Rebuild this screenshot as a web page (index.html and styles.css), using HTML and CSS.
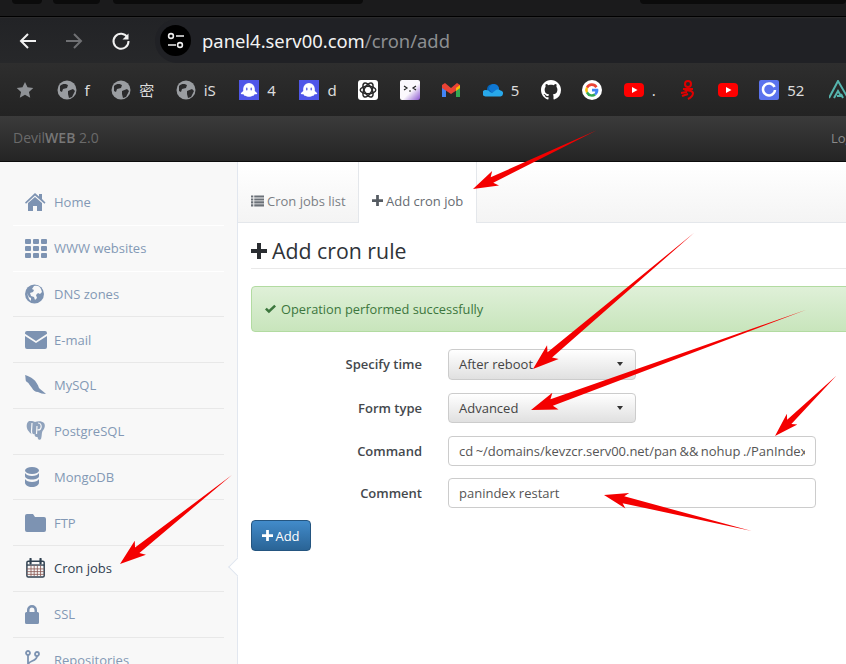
FILE: index.html
```html
<!DOCTYPE html>
<html lang="en">
<head>
<meta charset="utf-8">
<title>DevilWEB 2.0</title>
<link rel="stylesheet" href="styles.css">
</head>
<body>
<div class="page">
  <div class="tabstrip">
    <div class="tab t1"></div>
    <div class="tab t2"></div>
    <div class="tab t3"></div>
    <div class="tab t4"></div>
  </div>
  <div class="toolbar">
    <svg class="nav-icon" viewBox="0 0 20 20"><path d="M18 10H3M10 3l-7 7 7 7" fill="none" stroke="#f1f1f1" stroke-width="2"/></svg>
    <svg class="nav-icon" viewBox="0 0 20 20"><path d="M2 10h15M10 3l7 7-7 7" fill="none" stroke="#6f7073" stroke-width="2"/></svg>
    <svg class="nav-icon" viewBox="0 0 20 20"><path d="M16.500 6.500A7.500 7.500 0 1 0 17.500 10" fill="none" stroke="#f1f1f1" stroke-width="2"/><path d="M17.500 2.500v6h-6z" fill="#f1f1f1"/></svg>
    <div class="address">
      <span class="site-badge">
        <svg viewBox="0 0 20 20" width="20" height="20"><circle cx="5" cy="5" r="2.400" fill="none" stroke="#eee" stroke-width="1.600"/><path d="M10 5h8M2 14h8" stroke="#eee" stroke-width="1.600"/><circle cx="14" cy="14" r="2.400" fill="none" stroke="#eee" stroke-width="1.600"/></svg>
      </span>
      <span class="url"><span class="host">panel4.serv00.com</span>/cron/add</span>
    </div>
  </div>
  <div class="bookmarks">
    <svg class="bm-star" viewBox="0 0 20 20"><path d="M10 1l2.800 6 6.400.7-4.800 4.400 1.400 6.400-5.800-3.300-5.800 3.300 1.400-6.400L.8 7.700 7.200 7z" fill="#8f9296"/></svg>
    <div class="bm"><svg class="bm-icon"><use href="#i-bmglobe"/></svg><span>f</span></div>
    <div class="bm"><svg class="bm-icon"><use href="#i-bmglobe"/></svg><span>密</span></div>
    <div class="bm"><svg class="bm-icon"><use href="#i-bmglobe"/></svg><span>iS</span></div>
    <div class="bm shifted"><svg class="bm-icon"><use href="#i-ghost"/></svg><span>4</span></div>
    <div class="bm shifted"><svg class="bm-icon"><use href="#i-ghost"/></svg><span>d</span></div>
    <div class="bm"><svg class="bm-icon" viewBox="0 0 20 20"><rect width="20" height="20" rx="3" fill="#fff"/><g fill="none" stroke="#2a2a2a" stroke-width="1.500"><ellipse cx="10" cy="10" rx="7.800" ry="3.800"/><ellipse cx="10" cy="10" rx="7.800" ry="3.800" transform="rotate(60 10 10)"/><ellipse cx="10" cy="10" rx="7.800" ry="3.800" transform="rotate(120 10 10)"/></g></svg></div>
    <div class="bm"><svg class="bm-icon" viewBox="0 0 20 20"><defs><linearGradient id="kao" x1="0" y1="0" x2="1" y2="1"><stop offset=".55" stop-color="#fbf8fd"/><stop offset="1" stop-color="#8a55d0"/></linearGradient></defs><rect width="20" height="20" rx="2" fill="url(#kao)"/><path d="M4 6l3 2-3 2M16 6l-3 2 3 2M9 11h2" fill="none" stroke="#222" stroke-width="1.200"/></svg></div>
    <div class="bm"><svg class="bm-icon" viewBox="0 0 20 20"><path d="M1 5v12h4V8z" fill="#4285f4"/><path d="M19 5v12h-4V8z" fill="#34a853"/><path d="M1 5l3-2 6 5 6-5 3 2v3l-9 6-9-6z" fill="#ea4335"/><path d="M15 8l4-3 0 3-4 3z" fill="#fbbc04"/></svg></div>
    <div class="bm"><svg class="bm-icon" viewBox="0 0 20 20"><path d="M4 10a5.500 5.500 0 0 1 10-3.500L9 13H4z" fill="#0364b8"/><path d="M11 4a5 5 0 0 1 5 6l-7 3-3-4a5 5 0 0 1 5-5z" fill="#0f78d4"/><path d="M2.500 16.500a3 3 0 0 1 .5-6.500c2 0 3 .8 4 2l2 1 4-3c2-.8 3.500-.5 4.500.5 2 .5 3 2 2.500 3.500a3 3 0 0 1-2.500 2.500z" fill="#28a8ea"/></svg><span>5</span></div>
    <div class="bm"><svg class="bm-icon" viewBox="0 0 16 16"><path fill="#fff" d="M8 0C3.580 0 0 3.580 0 8c0 3.540 2.290 6.530 5.470 7.590.4.070.55-.170.550-.380 0-.190-.010-.820-.010-1.490-2.010.370-2.530-.490-2.690-.940-.090-.230-.480-.940-.820-1.130-.280-.150-.680-.520-.010-.530.630-.010 1.080.580 1.230.820.720 1.210 1.870.870 2.330.660.070-.520.280-.870.510-1.070-1.780-.200-3.640-.890-3.640-3.950 0-.870.310-1.590.820-2.150-.080-.200-.360-1.020.080-2.120 0 0 .670-.210 2.200.820.640-.180 1.320-.270 2-.270s1.360.090 2 .270c1.530-1.040 2.200-.820 2.200-.820.440 1.100.160 1.920.080 2.120.510.560.820 1.270.820 2.150 0 3.070-1.870 3.750-3.650 3.950.290.250.540.730.540 1.480 0 1.070-.010 1.930-.010 2.200 0 .210.150.460.550.380A8.010 8.010 0 0 0 16 8c0-4.420-3.580-8-8-8z"/></svg></div>
    <div class="bm"><svg class="bm-icon" viewBox="0 0 20 20"><circle cx="10" cy="10" r="10" fill="#fff"/><path d="M15.500 6.500A6.500 6.500 0 0 0 4 6.800l2 1.800a4 4 0 0 1 7.300-.6z" fill="#ea4335"/><path d="M4 6.800a6.500 6.500 0 0 0 0 6.400l2-1.600a4 4 0 0 1 0-3z" fill="#fbbc04"/><path d="M4 13.200a6.500 6.500 0 0 0 10 2l-2-1.600a4 4 0 0 1-6-2z" fill="#34a853"/><path d="M10 8.800h6.200a6.500 6.500 0 0 1-2.200 6.400l-2-1.600a3 3 0 0 0 1.300-2.200H10z" fill="#4285f4"/></svg></div>
    <div class="bm roomy"><svg class="bm-icon"><use href="#i-yt"/></svg><span>.</span></div>
    <div class="bm"><svg class="bm-icon narrow" viewBox="0 0 16 20"><g fill="none" stroke="#e00000" stroke-width="2"><circle cx="8" cy="4" r="3"/><path d="M3 9h10M4 9c2 3 8 0 9 4 0 3-3 5-5 6M1 13l6-1M2 16l6-2"/></g></svg></div>
    <div class="bm"><svg class="bm-icon"><use href="#i-yt"/></svg></div>
    <div class="bm roomy"><svg class="bm-icon" viewBox="0 0 20 20"><rect width="20" height="20" rx="2" fill="#5b73ee"/><path d="M15.500 7A6 6 0 1 0 16 10" fill="none" stroke="#fff" stroke-width="2.500"/></svg><span>52</span></div>
    <div class="bm"><svg class="bm-icon" viewBox="0 0 20 20"><path d="M0 18L9 1l10 17M5 18l4-7 3 5H8M14 18l-2-4" fill="none" stroke="#56b4ad" stroke-width="2"/></svg></div>
  </div>
  <div class="navbar">
    <div class="brand">Devil<b>WEB</b> 2.0</div>
    <div class="login">Logout</div>
  </div>
  <div class="layout">
    <nav class="sidebar">
      <a class="item"><svg class="ico" viewBox="0 0 22 20"><path d="M10 1l4 3.500V2h3v5l3.500 3.500-1 1.200L10 3.500 1 11.700 0 10.500zM3 11l7-6 7 6v8h-5v-5H8v5H3z"/></svg>Home</a>
      <a class="item"><svg class="ico" viewBox="0 0 22 20"><g><rect x="0" y="1" width="6" height="5" rx="1"/><rect x="8" y="1" width="6" height="5" rx="1"/><rect x="16" y="1" width="6" height="5" rx="1"/><rect x="0" y="8" width="6" height="5" rx="1"/><rect x="8" y="8" width="6" height="5" rx="1"/><rect x="16" y="8" width="6" height="5" rx="1"/><rect x="0" y="15" width="6" height="5" rx="1"/><rect x="8" y="15" width="6" height="5" rx="1"/><rect x="16" y="15" width="6" height="5" rx="1"/></g></svg>WWW websites</a>
      <a class="item"><svg class="ico" viewBox="0 0 22 20"><circle cx="9.500" cy="10" r="9.500"/><path fill="#f8f8f8" d="M9 2c3-1 6 0 7 3l1 3-2 2-2-1-2 2 1 3-2 2-1-3-3-1-1-3 3-1 1-2-2-1zM2 9l2 4 2 1 0 3-2-2z"/></svg>DNS zones</a>
      <a class="item"><svg class="ico" viewBox="0 0 22 20"><path d="M2 1h18a2 2 0 0 1 2 2v.7L11 11 0 3.700V3a2 2 0 0 1 2-2zM0 6l11 7 11-7v11a2 2 0 0 1-2 2H2a2 2 0 0 1-2-2z"/></svg>E-mail</a>
      <a class="item"><svg class="ico" viewBox="0 0 22 20"><path d="M0 0c3 1 6 2 8 4 3 2 5 6 6 9 2 2 5 4 7 6-3 0-6-1-8-2-3 0-5-2-6-4C5 11 4 8 2 7 0 6 1 3 0 0z"/></svg>MySQL</a>
      <a class="item"><svg class="ico" viewBox="0 0 22 20"><path d="M4 0c3-.5 5 .5 6 1 3-1 7-1 9 1 2 3 0 6-1.500 8-1 2-.5 5-1.500 8-1 1.500-3 1-3.500-2-2 .5-3-1-3-3-2 1-4 0-6-3C1 7 1 2 4 0z" opacity=".85"/><path d="M7 2l-.5 8c0 3 1 4 2.500 4M13 2c3 0 4 3 2.500 6-1 1-2 1-3 1M12 5l-.5 8" fill="none" stroke="#f8f8f8" stroke-width="1.200"/></svg>PostgreSQL</a>
      <a class="item"><svg class="ico" viewBox="0 0 22 20"><ellipse cx="7" cy="3.500" rx="7" ry="3.500"/><path d="M0 6c1 2 4 3 7 3s6-1 7-3v3c0 2-3 3.500-7 3.500S0 11 0 9zM0 12c1 2 4 3 7 3s6-1 7-3v3.500C14 18 11 20 7 20s-7-2-7-4.500z"/></svg>MongoDB</a>
      <a class="item"><svg class="ico" viewBox="0 0 22 20"><path d="M2 1h6l2 3h9a2 2 0 0 1 2 2v11a2 2 0 0 1-2 2H2a2 2 0 0 1-2-2V3a2 2 0 0 1 2-2z"/></svg>FTP</a>
      <a class="item active"><svg class="ico" viewBox="0 0 22 22"><rect x="1" y="3.500" width="19" height="17.500" rx="1.500" fill="none" stroke="currentColor" stroke-width="1.600"/><path d="M1 7h19v1.500H1z"/><path d="M5 1v5M16 1v5" stroke="currentColor" stroke-width="2.400" stroke-linecap="round"/><path d="M1 12h19M1 15h19M1 18h19M5.500 8v12M9 8v12M12.500 8v12M16 8v12" stroke="#8a5a55" stroke-width=".9"/></svg>Cron jobs</a>
      <a class="item"><svg class="ico" viewBox="0 0 22 20"><path d="M2 8V6a5 5 0 0 1 10 0v2h.5A1.500 1.500 0 0 1 14 9.500v9a1.500 1.500 0 0 1-1.500 1.500h-11A1.500 1.500 0 0 1 0 18.500v-9A1.500 1.500 0 0 1 1.500 8zm2.500 0h5V6a2.500 2.500 0 0 0-5 0z"/></svg>SSL</a>
      <a class="item"><svg class="ico" viewBox="0 0 22 20"><g fill="none" stroke="currentColor" stroke-width="1.800"><circle cx="3" cy="3" r="2"/><circle cx="12" cy="4" r="2"/><path d="M3 5v14M12 6c0 6-9 4-9 9"/></g></svg>Repositories</a>
      <span class="pointer"></span>
    </nav>
    <main class="main">
      <div class="tabs">
        <a class="tablink"><svg class="tico" viewBox="0 0 14 12"><path d="M0 0h2.500v2.200H0zM3.500 0H14v2.200H3.500zM0 3.200h2.500v2.200H0zM3.500 3.200H14v2.200H3.500zM0 6.400h2.500v2.200H0zM3.500 6.400H14v2.200H3.500zM0 9.600h2.500v2.200H0zM3.500 9.600H14v2.200H3.500z"/></svg>Cron jobs list</a>
        <a class="tablink current"><svg class="tico plus" viewBox="0 0 12 12"><path d="M4.500 0h3v4.500H12v3H7.500V12h-3V7.500H0v-3h4.500z"/></svg>Add cron job</a>
      </div>
      <div class="content">
        <h1 class="title"><svg class="title-ico" viewBox="0 0 12 12"><path d="M4.500 0h3v4.500H12v3H7.500V12h-3V7.500H0v-3h4.500z"/></svg>Add cron rule</h1>
        <div class="alert"><svg class="check" viewBox="0 0 14 12"><path d="M0 6.500L2.200 4.300 5 7.100 11.800.5 14 2.700 5 11.500z"/></svg>Operation performed successfully</div>
        <form class="form">
          <label class="lbl">Specify time</label>
          <div class="select tall"><span>After reboot</span><i class="caret"></i></div>
          <label class="lbl">Form type</label>
          <div class="select"><span>Advanced</span><i class="caret"></i></div>
          <label class="lbl">Command</label>
          <input class="input cmd" type="text" value="cd ~/domains/kevzcr.serv00.net/pan &amp;&amp; nohup ./PanIndex -c config.json &gt; /dev/null 2&gt;&amp;1 &amp;">
          <label class="lbl">Comment</label>
          <input class="input" type="text" value="panindex restart">
        </form>
        <button class="btn" type="button"><svg class="btn-ico" viewBox="0 0 12 12"><path d="M4.500 0h3v4.500H12v3H7.500V12h-3V7.500H0v-3h4.500z"/></svg>Add</button>
      </div>
    </main>
  </div>

  <svg class="arrows" width="846" height="664" viewBox="0 0 846 664">
    <g fill="#f40000">
      <polygon transform="translate(473 189) rotate(-25.400)" points="0,0 25,-8 21,-3 137,0 21,3 25,8"/>
      <polygon transform="translate(533 369) rotate(-40.200)" points="0,0 26,-9 22,-3.500 211,0 22,3.500 26,9"/>
      <polygon transform="translate(531 410) rotate(-20)" points="0,0 26,-9 22,-3.500 293,0 22,3.500 26,9"/>
      <polygon transform="translate(775 436) rotate(-44.500)" points="0,0 24,-7.500 20,-3 86,0 20,3 24,7.500"/>
      <polygon transform="translate(604 495) rotate(13.700)" points="0,0 24,-8 20,-3.500 152,0 20,3.500 24,8"/>
      <polygon transform="translate(120 564) rotate(-38.500)" points="0,0 26,-9 22,-3.500 143,0 22,3.500 26,9"/>
    </g>
  </svg>

  <svg class="defs" width="0" height="0">
    <symbol id="i-bmglobe" viewBox="0 0 20 20"><circle cx="10" cy="10" r="9.500" fill="#9a9da1"/><path d="M3 6c3-3 6-2 8-1l-1 3-4 1-1 3-2-1zM11 11l5-2 2 2-3 6-3 1-1-4z" fill="#2b2b2c"/></symbol>
    <symbol id="i-ghost" viewBox="0 0 20 20"><rect width="20" height="20" fill="#4f56e8"/><path d="M10 3a5.800 5.800 0 0 1 5.800 5.800V11l2.200 2c.4.600 0 1.200-.7 1.200h-1.800c-.5 1.200-1.300 2-2.300 1.600-.5 .6-1.700 1-3.200 1s-2.700-.4-3.200-1c-1 .4-1.800-.4-2.300-1.600H2.700c-.7 0-1.100-.6-.7-1.200L4.200 11V8.800A5.800 5.800 0 0 1 10 3z" fill="#fff"/><path d="M7.800 8.200v1.600M12.200 8.200v1.600" stroke="#4f56e8" stroke-width="1.300" stroke-linecap="round"/></symbol>
    <symbol id="i-yt" viewBox="0 0 20 20"><rect x="0" y="3" width="20" height="14" rx="4" fill="#ff0000"/><path d="M8 7l5.500 3L8 13z" fill="#fff"/></symbol>
  </svg>
</div>
</body>
</html>
```

FILE: styles.css
```css
* { box-sizing: border-box; }
html, body { margin: 0; padding: 0; }
body { background: #fff; font-family: "Open Sans", "Noto Sans", sans-serif; }
.page { position: relative; width: 846px; height: 664px; overflow: hidden; }

.tabstrip { height: 17px; background: #1b1b1c; display: flex; border-bottom: 1px solid #000; }
.tab { height: 4px; background: #0b0b0b; border-radius: 0 0 10px 10px; }
.t1 { width: 30px; margin-left: 12px; }
.t2 { width: 47px; margin-left: 11px; }
.t3 { width: 250px; margin-left: 13px; }
.t4 { width: 206px; margin-left: 277px; }

.toolbar { height: 46px; background: linear-gradient(#222326, #27282a); display: flex; align-items: center; padding-left: 18px; border-top: 1px solid #2a2a2b; }
.nav-icon { width: 20px; height: 20px; margin-right: 26px; flex: none; }
.nav-icon:nth-child(3) { margin-left: 1px; margin-right: 0; }
.address { flex: 1; height: 44px; background: #202125; border-radius: 22px 0 0 22px; display: flex; align-items: center; padding-left: 5px; gap: 11px; margin-left: 24px; }
.site-badge { width: 31px; height: 31px; border-radius: 50%; background: #000; display: flex; align-items: center; justify-content: center; }
.url { font-family: "Noto Sans", sans-serif; font-size: 18.400px; color: #8c8e91; }
.host { color: #f3f3f3; }

.bookmarks { height: 53px; background: linear-gradient(#2e2e2e, #232323); display: flex; align-items: center; gap: 21.500px; padding-left: 16px; color: #dcdcdc; font-size: 15px; font-family: "Noto Sans", "Noto Sans CJK SC", sans-serif; white-space: nowrap; }
.bm-star { width: 18px; height: 18px; margin-right: 1px; flex: none; }
.bm { display: flex; align-items: center; gap: 8px; flex: none; }
.bm.roomy { margin-right: 3px; }
.bm.shifted { margin-left: 2px; }
.bm-icon { width: 20px; height: 20px; flex: none; }
.bm-icon.narrow { width: 16px; }

.navbar { height: 46px; background: linear-gradient(#3b3b3b, #242424); border-bottom: 1px solid #0c0c0c; display: flex; align-items: center; justify-content: space-between; padding: 0 0 2px 13px; font-size: 14px; color: #6a6a6a; white-space: nowrap; }
.brand b { font-weight: 600; color: #777; }
.login { color: #8a8a8a; font-size: 13px; width: 15px; overflow: hidden; flex: none; }

.layout { display: flex; width: 1000px; height: 502px; }
.sidebar { position: relative; width: 238px; flex: none; background: #f8f8f8; border-right: 1px solid #e2e7ef; padding: 18px 13px 0; }
.item { display: flex; align-items: center; height: 45.750px; padding-left: 12px; border-bottom: 1px solid #e8e8e8; color: #8398b5; font-size: 13px; }
.item:nth-child(-n+2) { border-bottom-color: #fff; }
.ico { width: 22px; height: 20px; margin-right: 7px; fill: #7d93b2; color: #7d93b2; flex: none; }
.active { color: #2f4050; }
.active .ico { fill: #2f4050; color: #2f4050; }
.pointer { position: absolute; right: -8px; top: 398px; width: 14px; height: 14px; background: #fff; border-left: 1px solid #dfe5ee; border-bottom: 1px solid #dfe5ee; transform: rotate(45deg); }

.main { flex: 1; min-width: 0; background: #fff; position: relative; }
.tabs { height: 61px; display: flex; align-items: flex-end; border-bottom: 1px solid #e4e7eb; background: linear-gradient(#fff, #f4f4f4); }
.tablink { height: 60px; padding: 30px 13px 0 13px; font-size: 13px; color: #7b7f85; white-space: nowrap; display: flex; align-items: flex-start; }
.tablink:first-child { width: 120px; }
.tablink.current { width: 119px; height: 61px; margin-bottom: -1px; background: #fff; color: #666c72; border-left: 1px solid #e4e7eb; border-right: 1px solid #e4e7eb; padding-top: 30px; }
.tico { width: 13px; height: 12px; margin: 3px 3px 0 0; fill: #6b7178; flex: none; }
.tico.plus { width: 11px; height: 11px; margin-right: 3px; fill: #555b62; }

.content { padding: 0 0 0 13px; }
.title { margin: 0 0 17px; height: 46px; padding-top: 11px; font-size: 21.300px; font-weight: 400; color: #2f3338; border-bottom: 1px solid #e9e9e9; line-height: 30px; display: flex; align-items: center; }
.title-ico { width: 16px; height: 16px; margin-right: 5px; fill: #2a2d31; flex: none; }
.alert { height: 46px; border: 1px solid #b2dba1; border-radius: 4px; background: linear-gradient(#dff0d8, #c8e5bc); color: #3c763d; font-size: 12.800px; display: flex; align-items: center; padding-left: 13px; }
.check { width: 11px; height: 10px; margin-right: 5px; fill: #3c763d; flex: none; }

.form { display: grid; grid-template-columns: 171px 368px; grid-template-rows: 32px 31px 30px 30px; column-gap: 26px; row-gap: 12px; margin-top: 17px; align-items: start; }
.lbl { text-align: right; font-size: 13px; font-weight: 600; color: #44484d; line-height: 30px; }
.select { width: 188px; height: 30px; border: 1px solid #ccc; border-radius: 4px; background: linear-gradient(#fff, #e0e0e0); font-size: 13px; color: #444; display: flex; align-items: center; justify-content: space-between; padding: 0 12px 0 10px; }
.select.tall { height: 31px; padding-bottom: 1px; }
.caret { width: 0; height: 0; border-left: 3.500px solid transparent; border-right: 3.500px solid transparent; border-top: 4px solid #333; }
.input { width: 368px; height: 30px; border: 1px solid #ccc; border-radius: 4px; padding: 0 10px; font: 13px "Open Sans", sans-serif; color: #555; background: #fff; }
.cmd { word-spacing: -.8px; letter-spacing: -.04px; }
.btn { display: flex; align-items: center; justify-content: center; margin-top: 12px; width: 60px; height: 31px; border: 1px solid #245580; border-radius: 4px; background: linear-gradient(#428bca, #2a6496); color: #fff; font: 13px "Open Sans", sans-serif; padding: 0; }
.btn-ico { width: 11px; height: 11px; margin-right: 2px; fill: #fff; flex: none; }

.arrows { position: absolute; left: 0; top: 0; pointer-events: none; }
.defs { position: absolute; }
```
